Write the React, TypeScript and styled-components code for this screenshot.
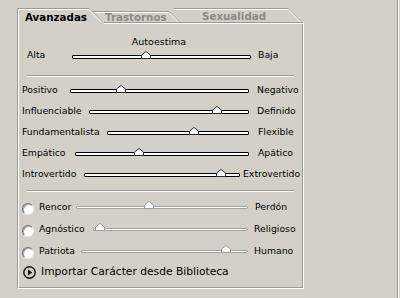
import styled, { createGlobalStyle } from "styled-components";

const BG = "#d4d0c8";
const SHADE = "#9d9a94";

const GlobalStyle = createGlobalStyle`
  html, body {
    margin: 0;
    padding: 0;
    background: ${BG};
  }
  body {
    font-family: "DejaVu Sans", Verdana, sans-serif;
    color: #000;
  }
`;

type Slider = {
  left: string;
  right: string;
  from: number;
  to: number;
  at: number;
  rightAt: number;
};

const sliders: Slider[] = [
  { left: "Positivo", right: "Negativo", from: 70, to: 249, at: 121, rightAt: 257 },
  { left: "Influenciable", right: "Definido", from: 89, to: 249, at: 217, rightAt: 257 },
  { left: "Fundamentalista", right: "Flexible", from: 107, to: 249, at: 194, rightAt: 258 },
  { left: "Empático", right: "Apático", from: 75, to: 249, at: 139, rightAt: 258 },
  { left: "Introvertido", right: "Extrovertido", from: 84, to: 240, at: 221, rightAt: 243 },
];

const options: Slider[] = [
  { left: "Rencor", right: "Perdón", from: 76, to: 248, at: 149, rightAt: 255 },
  { left: "Agnóstico", right: "Religioso", from: 93, to: 248, at: 100, rightAt: 254 },
  { left: "Patriota", right: "Humano", from: 81, to: 248, at: 226, rightAt: 254 },
];

const ROW_X = 22;
const RADIO_LABEL_X = 39;

function Thumb({ $off }: { $off?: boolean }) {
  return (
    <svg width="10" height="8" viewBox="0 0 10 8">
      <path
        d="M0.5 7.5 V4 L5 0.5 L9.5 4 V7.5 Z"
        fill="#fff"
        stroke={$off ? "#9a9a9a" : "#2a2a2a"}
        strokeWidth="1"
      />
    </svg>
  );
}

function SliderTrack({ from, to, at, off }: { from: number; to: number; at: number; off?: boolean }) {
  return (
    <Track $w={to - from} $off={off}>
      <ThumbSpot $x={Math.round(at - from - 5)} $off={off}>
        <Thumb $off={off} />
      </ThumbSpot>
    </Track>
  );
}

function Slant({ w, h, active }: { w: number; h: number; active?: boolean }) {
  return (
    <SlantBox width={w} height={h} viewBox={`0 0 ${w} ${h}`}>
      <polygon points={`0,0 ${w},${w} ${w},${h} 0,${h}`} fill={BG} />
      <line x1="0" y1="0.5" x2={w} y2={w + 0.5} stroke={SHADE} strokeWidth="1" />
      <line x1="0" y1="1.5" x2={w - 1} y2={w + 0.5} stroke="#fff" strokeWidth="1" />
      {active && <rect x="0" y={h - 2} width={w} height="2" fill={BG} />}
    </SlantBox>
  );
}

export default function App() {
  return (
    <Page>
      <GlobalStyle />
      <Frame>
        <TabBar>
          <Tab $z={3} $active>
            <TabFace $w={72} $h={16} $pad={7} $active>
              Avanzadas
            </TabFace>
            <Slant w={15} h={16} active />
          </Tab>
          <Tab $z={2} $ml={-12}>
            <TabFace $w={77} $h={11} $pad={13}>
              Trastornos
            </TabFace>
            <Slant w={12} h={11} />
          </Tab>
          <Tab $z={1} $ml={-7}>
            <TabFace $w={114} $h={14} $pad={28}>
              Sexualidad
            </TabFace>
            <Slant w={15} h={14} />
          </Tab>
        </TabBar>

        <Panel>
          <Title>Autoestima</Title>
          <AutoRow>
            <LabelCell $w={72 - 27}>Alta</LabelCell>
            <SliderTrack from={72} to={251} at={146} />
            <SideLabel $gap={258 - 251}>Baja</SideLabel>
          </AutoRow>

          <Separator />

          {sliders.map((s) => (
            <Row key={s.left}>
              <LabelCell $w={s.from - ROW_X}>{s.left}</LabelCell>
              <SliderTrack from={s.from} to={s.to} at={s.at} />
              <SideLabel $gap={s.rightAt - s.to}>{s.right}</SideLabel>
            </Row>
          ))}

          <Separator $top={6} $bottom={4} />

          {options.map((s) => (
            <OptionRow key={s.left}>
              <Radio />
              <LabelCell $w={s.from - RADIO_LABEL_X}>{s.left}</LabelCell>
              <SliderTrack from={s.from} to={s.to} at={s.at} off />
              <SideLabel $gap={s.rightAt - s.to}>{s.right}</SideLabel>
            </OptionRow>
          ))}

          <ImportRow>
            <svg width="13" height="13" viewBox="0 0 13 13">
              <circle cx="6.5" cy="6.5" r="5.7" fill="none" stroke="#111" strokeWidth="1.4" />
              <polygon points="5,3.5 9.3,6.5 5,9.5" fill="#111" />
            </svg>
            <ImportText>Importar Carácter desde Biblioteca</ImportText>
          </ImportRow>
        </Panel>
      </Frame>
    </Page>
  );
}

const Page = styled.div`
  width: 399px;
  height: 298px;
  box-sizing: border-box;
  padding: 8px 0 0 17px;
  background: ${BG};
  border-right: 1px solid #fff;
  box-shadow: inset -1px 0 0 ${SHADE};
  overflow: hidden;
`;

const Frame = styled.div`
  width: 287px;
`;

const TabBar = styled.div`
  display: flex;
  align-items: flex-start;
  height: 14px;
  position: relative;
  z-index: 1;
`;

const Tab = styled.div<{ $z: number; $ml?: number; $active?: boolean }>`
  display: flex;
  align-items: flex-start;
  align-self: flex-end;
  margin-left: ${(p) => p.$ml ?? 0}px;
  margin-bottom: ${(p) => (p.$active ? -2 : 0)}px;
  position: relative;
  z-index: ${(p) => p.$z};
`;

const TabFace = styled.div<{ $w: number; $h: number; $pad: number; $active?: boolean }>`
  width: ${(p) => p.$w}px;
  height: ${(p) => p.$h}px;
  box-sizing: border-box;
  padding: ${(p) => (p.$active ? 2 : p.$h > 12 ? 1 : 0)}px 0 0 ${(p) => p.$pad}px;
  background: ${BG};
  border-top: 1px solid ${SHADE};
  border-left: ${(p) => (p.$active ? `1px solid ${SHADE}` : "none")};
  box-shadow: inset ${(p) => (p.$active ? 1 : 0)}px 1px 0 #fff;
  font-size: 10.3px;
  font-weight: bold;
  line-height: ${(p) => (p.$active ? 13 : p.$h > 12 ? 12 : 10)}px;
  color: ${(p) => (p.$active ? "#000" : "#8c8a86")};
  white-space: nowrap;
`;

const SlantBox = styled.svg`
  display: block;
  flex: none;
`;

const Panel = styled.div`
  height: 267px;
  box-sizing: border-box;
  padding: 13px 1px 0 4px;
  border-top: 1px solid ${SHADE};
  border-left: 1px solid ${SHADE};
  border-right: 1px solid #fff;
  border-bottom: 1px solid #fff;
  box-shadow: inset 1px 1px 0 #fff, inset -1px -1px 0 ${SHADE};
  font-size: 9.3px;
`;

const Title = styled.div`
  height: 12px;
  line-height: 12px;
  text-align: center;
  padding-right: 6px;
  font-size: 9.5px;
`;

const Row = styled.div`
  display: flex;
  align-items: center;
  height: 21px;
  white-space: nowrap;
`;

const AutoRow = styled(Row)`
  height: 16px;
  padding-left: 5px;
  align-items: flex-start;
  padding-top: 1px;
  box-sizing: border-box;
  line-height: 12px;

  & > div:nth-child(2) {
    margin-top: 6px;
  }
`;

const OptionRow = styled(Row)`
  height: 22px;
`;

const LabelCell = styled.div<{ $w: number }>`
  width: ${(p) => p.$w}px;
  flex: none;
  line-height: 12px;
`;

const SideLabel = styled.div<{ $gap: number }>`
  margin-left: ${(p) => p.$gap}px;
  line-height: 12px;
`;

const Track = styled.div<{ $w: number; $off?: boolean }>`
  width: ${(p) => p.$w}px;
  height: ${(p) => (p.$off ? 3 : 4)}px;
  flex: none;
  box-sizing: border-box;
  margin-top: ${(p) => (p.$off ? 0 : 2)}px;
  position: relative;
  background: #fff;
  border: 1px solid ${(p) => (p.$off ? "#a4a4a4" : "#000")};
  border-radius: 1px;
`;

const ThumbSpot = styled.div<{ $x: number; $off?: boolean }>`
  position: absolute;
  left: ${(p) => p.$x - 1}px;
  top: ${(p) => (p.$off ? -6 : -5)}px;
  width: 10px;
  height: 8px;

  svg {
    display: block;
  }
`;

const Separator = styled.div<{ $top?: number; $bottom?: number }>`
  height: 0;
  margin: ${(p) => p.$top ?? 11}px 8px ${(p) => p.$bottom ?? 2}px 5px;
  border-top: 1px solid ${SHADE};
  border-bottom: 1px solid #fff;
`;

const Radio = styled.div`
  width: 12px;
  height: 12px;
  flex: none;
  box-sizing: border-box;
  margin: 3px 5px 0 0;
  border-radius: 50%;
  background: #fff;
  border: 1px solid;
  border-color: #6e6e6e #ececec #ececec #6e6e6e;
  box-shadow: inset 1px 1px 0 #a8a8a8;
`;

const ImportRow = styled.div`
  display: flex;
  align-items: center;
  height: 20px;
  padding-left: 1px;

  svg {
    display: block;
    flex: none;
    margin-right: 5px;
  }
`;

const ImportText = styled.span`
  font-size: 10.7px;
  line-height: 14px;
  white-space: nowrap;
`;
